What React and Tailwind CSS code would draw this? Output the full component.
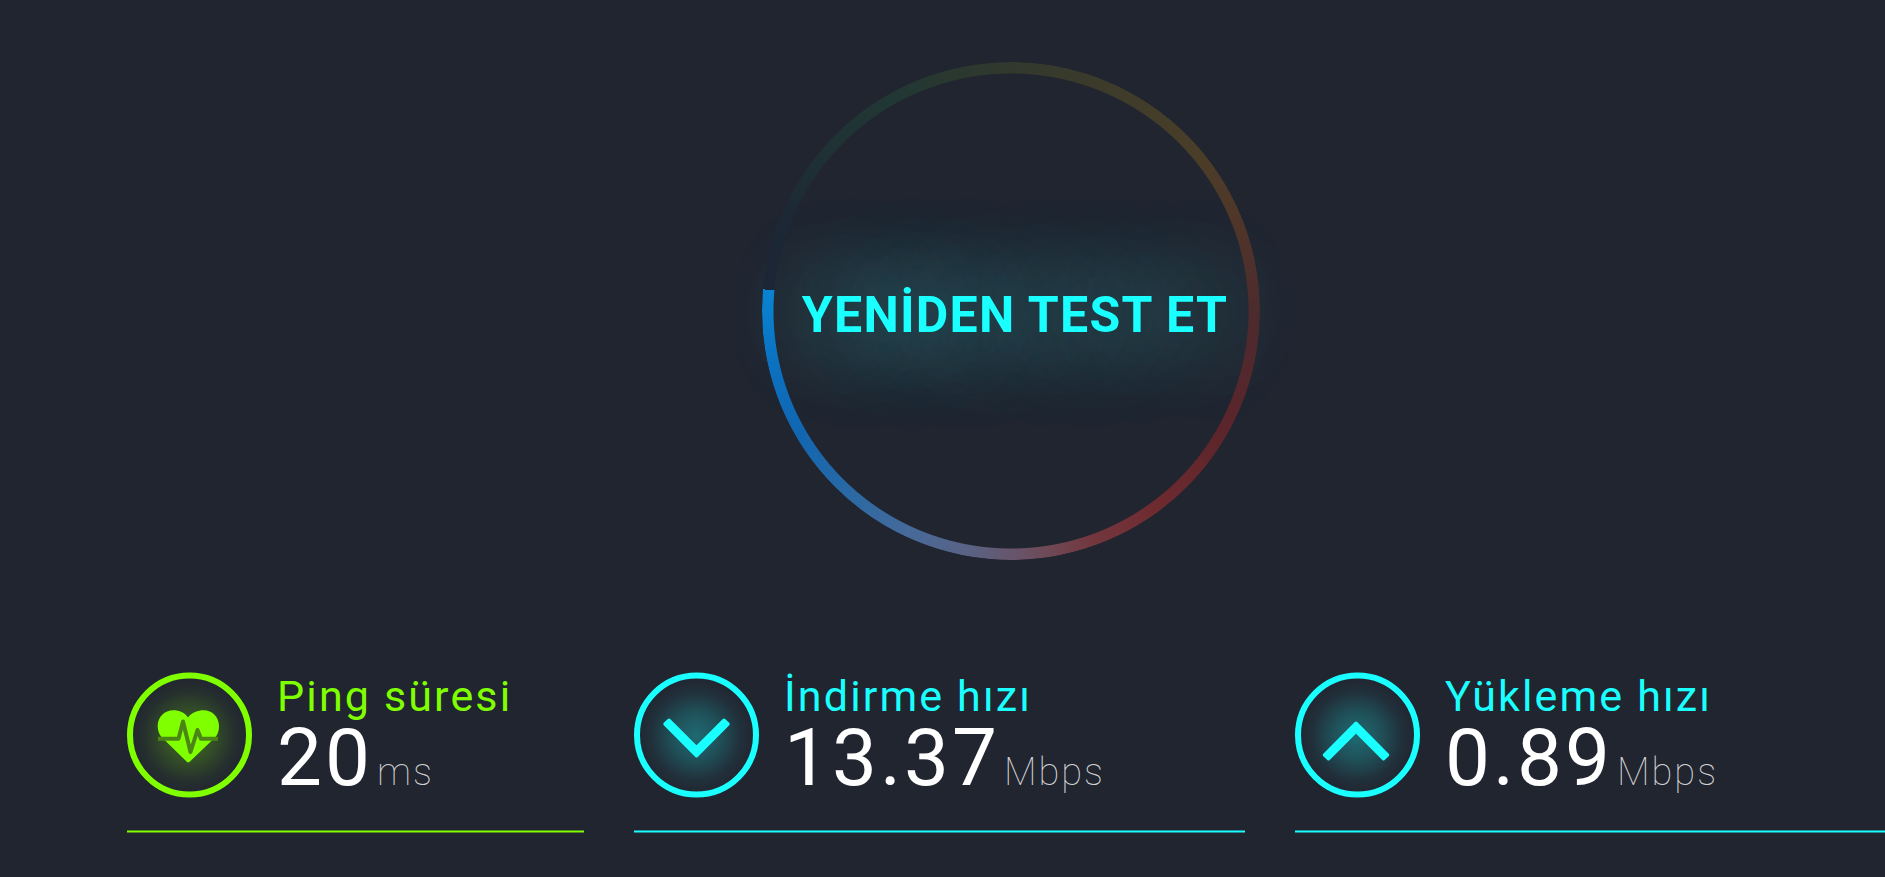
const HEART =
  'M61 45.5 C58 40.5 52 38.3 46.5 38.3 C37.5 38.3 30.7 45 30.7 54 C30.7 58.5 32 62 34.5 65 L59.8 89.8 C60.6 90.5 61.9 90.5 62.7 89.8 L88.5 65 C91 62 92 58.5 92 54 C92 45 85.3 38.3 76.5 38.3 C71 38.3 64.5 40.5 61 45.5 Z';

const stats = [
  {
    id: 'ping',
    label: 'Ping süresi',
    value: '20',
    unit: 'ms',
    text: 'text-[#80ff00]',
    line: 'bg-[#80ff00] border-[#80ff00]/50',
    icon: (
      <>
        <path d={HEART} fill="currentColor" />
        <path
          d="M31 66.7 H51.5 L56 49.5 L63.5 80 L70.5 58 L74 66.7 H91"
          fill="none"
          stroke="#4a8516"
          strokeWidth="4"
          strokeLinejoin="round"
        />
      </>
    ),
  },
  {
    id: 'download',
    label: 'İndirme hızı',
    value: '13.37',
    unit: 'Mbps',
    text: 'text-[#1affff]',
    line: 'bg-[#1affff] border-[#1affff]/50',
    icon: (
      <path
        d="M31 52 L35 48.3 L62.5 75.7 L90 48.3 L94 52 L62.5 83.8 Z"
        fill="currentColor"
        stroke="currentColor"
        strokeWidth="3.4"
        strokeLinejoin="round"
      />
    ),
  },
  {
    id: 'upload',
    label: 'Yükleme hızı',
    value: '0.89',
    unit: 'Mbps',
    text: 'text-[#1affff]',
    line: 'bg-[#1affff] border-[#1affff]/50',
    icon: (
      <path
        d="M29.5 83 L33.5 86.7 L61 59.3 L88.5 86.7 L92.5 83 L61 51.2 Z"
        fill="currentColor"
        stroke="currentColor"
        strokeWidth="3.4"
        strokeLinejoin="round"
      />
    ),
  },
];

function StatIcon({ id, children }) {
  return (
    <svg viewBox="0 0 126 126" className="size-[126px] shrink-0" aria-hidden="true">
      <defs>
        <radialGradient id={`glow-${id}`}>
          <stop offset="0" stopColor="currentColor" stopOpacity="0.32" />
          <stop offset="0.4" stopColor="currentColor" stopOpacity="0.2" />
          <stop offset="0.75" stopColor="currentColor" stopOpacity="0.05" />
          <stop offset="1" stopColor="currentColor" stopOpacity="0" />
        </radialGradient>
      </defs>
      <circle cx="62" cy="64" r="60" fill={`url(#glow-${id})`} />
      <circle cx="62.5" cy="63" r="59.5" fill="none" stroke="currentColor" strokeWidth="6" />
      {children}
    </svg>
  );
}

function Stat({ id, label, value, unit, text, line, icon }) {
  return (
    <div className={`min-w-0 ${text}`}>
      <div className="flex items-start gap-6">
        <StatIcon id={id}>{icon}</StatIcon>
        <div className="pt-[2px] whitespace-nowrap">
          <h2 className="text-[43px] leading-[44px] tracking-wider">{label}</h2>
          <p className="flex items-baseline gap-1 text-white">
            <span className="text-[80px] leading-[80px] tracking-[3px]">{value}</span>
            <span className="text-[38px] leading-[40px] font-thin tracking-[2px] text-[#d4d4d4]">{unit}</span>
          </p>
        </div>
      </div>
      <div className={`mt-8 h-[3px] border-y bg-clip-padding ${line}`} />
    </div>
  );
}

function RetestButton() {
  return (
    <button
      type="button"
      className="relative grid size-[498px] place-items-center rounded-full pt-2 pl-2 cursor-pointer"
    >
      <span className="whitespace-nowrap text-[50px] leading-[60px] font-bold tracking-wide text-[#1affff] [text-shadow:0_0_100px_#48ffff]">
        YENİDEN TEST ET
      </span>
      <span
        aria-hidden="true"
        className="absolute inset-0 rounded-full bg-[conic-gradient(#32382d_0deg,#3f3c2a_28deg,#4a3e28_50deg,#503729_66deg,#4c2a2e_92deg,#5c252b_120deg,#6d2a2f_142deg,#73363d_160deg,#6e4a57_172deg,#66566d_180deg,#5a6284_190deg,#466a9a_205deg,#2c69a3_220deg,#1166b1_240deg,#0b71c0_257deg,#0884d2_275deg,#1c2536_275deg,#1c2835_292deg,#1f3135_310deg,#213734_330deg,#293830_345deg,#32382d_360deg)] [mask:radial-gradient(closest-side,transparent_237px,#000_238px)]"
      />
    </button>
  );
}

export default function App() {
  return (
    <main className="min-h-screen overflow-hidden bg-[#212530] font-[Roboto,sans-serif] antialiased">
      <section className="flex justify-center pt-[62px] pl-[137px]">
        <RetestButton />
      </section>
      <section className="mt-28 -mr-[22px] grid grid-cols-[457fr_611fr_612fr] gap-[50px] pb-11 pl-[127px]">
        {stats.map((stat) => (
          <Stat key={stat.id} {...stat} />
        ))}
      </section>
    </main>
  );
}
